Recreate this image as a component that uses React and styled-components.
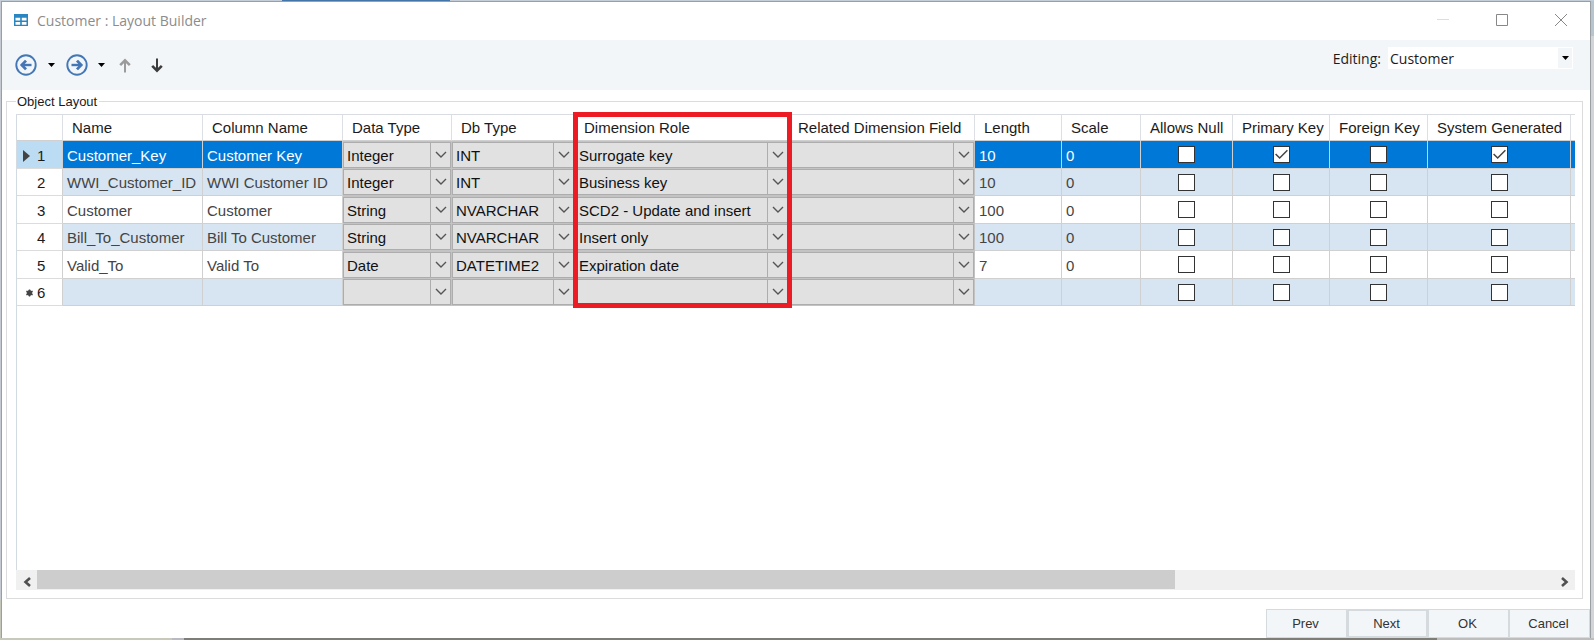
import React from "react";
import styled, { createGlobalStyle } from "styled-components";

const GlobalStyle = createGlobalStyle`
	* {
		box-sizing: border-box;
	}

	body {
		margin: 0;
		font-family: "Liberation Sans", Arial, sans-serif;
		color: #1b1b1b;
	}

	button, input, select {
		font-family: inherit;
		margin: 0;
	}
`;

// Whatever is open behind the window only shows as a thin rim.
const Desktop = styled.div`
	height: 100vh;
	padding: 1px 3px 2px 1px;
	background:
		linear-gradient(90deg, #c3ced9 282px, #4574a9 282px, #4574a9 450px, #c3ced9 450px) top / 100% 1px no-repeat,
		linear-gradient(90deg, #c9c9bb 172px, #b9b9c1 172px, #b9b9c1 184px, #7f7d78 184px, #7f7d78 1437px, #bdbdbd 1437px) bottom / 100% 2px no-repeat,
		linear-gradient(#b8c4ce 36px, #d2d4d7 36px) right / 3px 100% no-repeat,
		linear-gradient(#c5cad2 600px, #c3c6b8 600px);
`;

const Window = styled.div`
	display: flex;
	flex-direction: column;
	height: 100%;
	background: #fff;
	border: 1px solid #9a9fa4;
	border-bottom: 0;
`;

const TitleBar = styled.header`
	display: flex;
	align-items: center;
	height: 38px;
	padding: 0 0 2px 11px;
	gap: 8px;
`;

const Title = styled.h1`
	flex: 1;
	margin: 0;
	font: 400 14px "Open Sans", "Noto Sans", sans-serif;
	color: #8c8c8c;
`;

const WindowControls = styled.div`
	display: flex;
`;

const IconButton = styled.button`
	display: flex;
	align-items: center;
	justify-content: center;
	width: ${props => props.$width}px;
	height: 24px;
	padding: 0;
	border: 0;
	background: none;
`;

const Toolbar = styled.div`
	display: flex;
	align-items: flex-start;
	justify-content: space-between;
	height: 50px;
	padding: 7px 17px 0 11px;
	background: #f2f6f9;
`;

const Tools = styled.div`
	display: flex;
	padding-top: 6px;
`;

const Editing = styled.div`
	display: flex;
	align-items: center;
	gap: 7px;
	font: 400 14px "Open Sans", "Noto Sans", sans-serif;
`;

const EditingBox = styled.div`
	display: flex;
	align-items: center;
	width: 185px;
	height: 22px;
	background: #fff;
`;

const PlainSelect = styled.select`
	flex: 1;
	min-width: 0;
	height: 100%;
	padding: 0 0 0 2px;
	border: 0;
	appearance: none;
	background: none;
	font: inherit;
	color: inherit;
`;

const SelectArrow = styled.span`
	display: flex;
	align-items: center;
	justify-content: center;
	width: 14px;
	height: 20px;
	margin-right: 1px;
	background: #f2f6f9;
`;

const Group = styled.fieldset`
	flex: 1;
	display: flex;
	flex-direction: column;
	min-width: 0;
	min-height: 0;
	margin: 3px 7px 0 4px;
	padding: 4px 7px 8px 9px;
	border: 1px solid #dcdcdc;
`;

const Legend = styled.legend`
	padding: 1px 2px 0 1px;
	font-size: 13px;
	line-height: 16px;
`;

const GridPane = styled.div`
	flex: 1;
	min-height: 0;
	overflow-x: clip;
	overflow-y: visible;
	border-top: 1px solid #d9dde2;
	border-left: 1px solid #d3dae2;
`;

const Table = styled.table`
	width: 1700px;
	table-layout: fixed;
	border-collapse: separate;
	border-spacing: 0;
	font-size: 15px;
	line-height: 18px;
`;

const HeadCell = styled.th`
	height: 26px;
	padding: 1px 0 0 9px;
	border-right: 1px solid #dcdfe3;
	border-bottom: 1px solid #d0d0d0;
	font-weight: 400;
	text-align: left;
	white-space: nowrap;
`;

const Row = styled.tr`
	height: 28px;
	color: ${props => (props.$selected ? "#fff" : "#444")};
	background: ${props => (props.$selected ? "#0078d7" : "#fff")};

	&:nth-child(even) {
		height: 27px;
		background: #d7e4f1;
	}
`;

const RowHead = styled.th`
	padding: 2px 0 0;
	border-right: 1px solid #d0d0d0;
	border-bottom: 1px solid #dcdcdc;
	background: ${props => (props.$selected ? "#bcdcf4" : "#fff")};
	color: #1b1b1b;
	font-weight: 400;
`;

const RowMark = styled.div`
	display: flex;
	align-items: center;

	svg {
		width: 20px;
		flex: none;
	}
`;

const Cell = styled.td`
	padding: 2px 0 0 4px;
	border-right: 1px solid #d0d0d0;
	border-bottom: 1px solid #d0d0d0;
	white-space: nowrap;
`;

const ComboCell = styled(Cell)`
	padding: 0;
	border-color: #c3c3c3;
	background: #c3c3c3;
`;

const CheckCell = styled(Cell)`
	padding: 0;
	text-align: center;
	line-height: 0;
`;

const Combo = styled.div`
	display: flex;
	align-items: center;
	height: 26px;
	border: 1px solid #adadad;
	background: #e1e1e1;
	color: #111;

	select {
		padding: 2px 0 0 3px;
		font-size: 15px;
	}
`;

const ComboArrow = styled.span`
	display: flex;
	align-items: center;
	justify-content: center;
	width: 20px;
	height: 100%;
	border-left: 1px solid #adadad;
`;

const Check = styled.input`
	width: 17px;
	height: 17px;
	appearance: none;
	border: 1px solid #333;
	background: #fff;

	&:checked {
		background: #fff url("data:image/svg+xml,%3Csvg xmlns='http://www.w3.org/2000/svg' viewBox='0 0 14 14'%3E%3Cpath d='M1.5 6.5l3.8 3.8L12.5 3' fill='none' stroke='%23444' stroke-width='1.4'/%3E%3C/svg%3E");
	}
`;

const Highlight = styled.div`
	position: absolute;
	top: -3px;
	left: -2px;
	width: 219px;
	height: 196px;
	border: 5px solid #ed1c24;
	pointer-events: none;
`;

const HighlightHead = styled(HeadCell)`
	position: relative;
`;

const ScrollBar = styled.div`
	display: flex;
	height: 20px;
	background: #f0f0f0;
`;

const ScrollTrack = styled.div`
	flex: 1;
`;

const ScrollThumb = styled.div`
	width: 75%;
	height: 19px;
	background: #cdcdcd;
`;

const Footer = styled.footer`
	display: flex;
	justify-content: flex-end;
	padding-top: 10px;
`;

const FooterButton = styled.button`
	width: 81px;
	height: 29px;
	padding: 0 2px 0 0;
	border: ${props => (props.$primary ? 2 : 1)}px solid #d5dade;
	background: #f2f6f9;
	font-size: 13px;
	color: #333;
`;

const Caret = () => (
	<svg width="7" height="4" viewBox="0 0 7 4"><path d="M0 0h7L3.5 4z" fill="#000" /></svg>
);

const Chevron = () => (
	<svg width="12" height="8" viewBox="0 0 12 8"><path d="M1 1l5 5 5-5" fill="none" stroke="#555" strokeWidth="1.4" /></svg>
);

const CircleArrow = ({ flip }) => (
	<svg width="22" height="22" viewBox="0 0 22 22" fill="none" stroke="#4377b5" transform={flip ? "scale(-1 1)" : undefined}>
		<circle cx="11" cy="11" r="9.7" strokeWidth="1.9" />
		<path d="M16.5 11H6.8" strokeWidth="2.4" />
		<path d="M11 6.6L6.8 11l4.2 4.4" strokeWidth="2.8" />
	</svg>
);

const VerticalArrow = ({ up }) => (
	<svg width="12" height="15" viewBox="0 0 12 15" fill="none" stroke={up ? "#9b9b9b" : "#3c3c3c"}>
		<path d={up ? "M6 14.5V2" : "M6 .5V13"} strokeWidth="2" />
		<path d={up ? "M1.2 7.2L6 2.4l4.8 4.8" : "M1.2 7.8L6 12.6l4.8-4.8"} strokeWidth="2.6" />
	</svg>
);

const ScrollArrow = ({ right }) => (
	<svg width="8" height="10" viewBox="0 0 8 10"><path d={right ? "M1 1l4.5 4L1 9" : "M7 1L2.5 5 7 9"} fill="none" stroke="#505050" strokeWidth="2.6" /></svg>
);

const TableIcon = () => (
	<svg width="16" height="14" viewBox="0 0 16 14">
		<path d="M1 1h14v12H1z" fill="#2a86c0" />
		<path d="M2.5 4.8h4.7v2.7H2.5zM8.8 4.8h4.7v2.7H8.8zM2.5 9h4.7v2.7H2.5zM8.8 9h4.7v2.7H8.8z" fill="#fff" />
	</svg>
);

const columns = [
	["Name", 140],
	["Column Name", 140],
	["Data Type", 109],
	["Db Type", 123],
	["Dimension Role", 214],
	["Related Dimension Field", 186],
	["Length", 87],
	["Scale", 79],
	["Allows Null", 92],
	["Primary Key", 97],
	["Foreign Key", 98],
	["System Generated", 143],
];

const rows = [
	{ text: ["Customer_Key", "Customer Key"], combos: ["Integer", "INT", "Surrogate key", ""], sizes: ["10", "0"], flags: [false, true, false, true] },
	{ text: ["WWI_Customer_ID", "WWI Customer ID"], combos: ["Integer", "INT", "Business key", ""], sizes: ["10", "0"], flags: [false, false, false, false] },
	{ text: ["Customer", "Customer"], combos: ["String", "NVARCHAR", "SCD2 - Update and insert", ""], sizes: ["100", "0"], flags: [false, false, false, false] },
	{ text: ["Bill_To_Customer", "Bill To Customer"], combos: ["String", "NVARCHAR", "Insert only", ""], sizes: ["100", "0"], flags: [false, false, false, false] },
	{ text: ["Valid_To", "Valid To"], combos: ["Date", "DATETIME2", "Expiration date", ""], sizes: ["7", "0"], flags: [false, false, false, false] },
	{ text: ["", ""], combos: ["", "", "", ""], sizes: ["", ""], flags: [false, false, false, false] },
];

const Marker = ({ index }) => (
	<svg height="16" viewBox="0 0 20 16">
		{index === 0 && <path d="M6 2v12l7-6z" fill="#444" />}
		{index === rows.length - 1 && (
			<g stroke="#444">
				<circle cx="12.5" cy="8" r="2.4" fill="#444" />
				<path d="M12.5 4.5v7M9.4 6.2l6.2 3.6M15.6 6.2L9.4 9.8" strokeWidth="1.4" />
			</g>
		)}
	</svg>
);

const LayoutRow = ({ row, index }) => {
	const selected = index === 0;
	return (
		<Row $selected={selected}>
			<RowHead scope="row" $selected={selected}>
				<RowMark><Marker index={index} />{index + 1}</RowMark>
			</RowHead>
			{row.text.map((text, i) => <Cell key={i}>{text}</Cell>)}
			{row.combos.map((value, i) => (
				<ComboCell key={i}>
					<Combo>
						<PlainSelect aria-label={columns[i + 2][0]} defaultValue={value}>
							<option>{value}</option>
						</PlainSelect>
						<ComboArrow><Chevron /></ComboArrow>
					</Combo>
				</ComboCell>
			))}
			{row.sizes.map((text, i) => <Cell key={i}>{text}</Cell>)}
			{row.flags.map((on, i) => (
				<CheckCell key={i}>
					<Check type="checkbox" aria-label={columns[i + 8][0]} defaultChecked={on} />
				</CheckCell>
			))}
			<Cell />
		</Row>
	);
};

const LayoutGrid = () => (
	<GridPane>
		<Table>
			<colgroup>
				<col style={{ width: 46 }} />
				{columns.map(([name, width]) => <col key={name} style={{ width }} />)}
				<col />
			</colgroup>
			<thead>
				<tr>
					<HeadCell />
					{columns.map(([name]) => (
						name === "Dimension Role"
							? <HighlightHead key={name}>{name}<Highlight /></HighlightHead>
							: <HeadCell key={name}>{name}</HeadCell>
					))}
					<HeadCell />
				</tr>
			</thead>
			<tbody>
				{rows.map((row, i) => <LayoutRow key={i} row={row} index={i} />)}
			</tbody>
		</Table>
	</GridPane>
);

const App = () => {
	return (
		<Desktop>
			<GlobalStyle />
			<Window>
				<TitleBar>
					<TableIcon />
					<Title>Customer : Layout Builder</Title>
					<WindowControls>
						<IconButton $width={59} aria-label="Minimize">
							<svg width="12" height="12" viewBox="0 0 12 12"><path d="M0 5.5h12" stroke="#ddd" /></svg>
						</IconButton>
						<IconButton $width={59} aria-label="Maximize">
							<svg width="12" height="12" viewBox="0 0 12 12"><path d="M.5.5h11v11H.5z" fill="none" stroke="#888" /></svg>
						</IconButton>
						<IconButton $width={59} aria-label="Close">
							<svg width="12" height="12" viewBox="0 0 12 12"><path d="M0 0l12 12M12 0L0 12" stroke="#888" /></svg>
						</IconButton>
					</WindowControls>
				</TitleBar>
				<Toolbar>
					<Tools>
						<IconButton $width={25} aria-label="Back"><CircleArrow /></IconButton>
						<IconButton $width={26} aria-label="Back history"><Caret /></IconButton>
						<IconButton $width={25} aria-label="Forward"><CircleArrow flip /></IconButton>
						<IconButton $width={24} aria-label="Forward history"><Caret /></IconButton>
						<IconButton $width={24} aria-label="Move up"><VerticalArrow up /></IconButton>
						<IconButton $width={40} aria-label="Move down"><VerticalArrow /></IconButton>
					</Tools>
					<Editing>
						<label htmlFor="editing">Editing:</label>
						<EditingBox>
							<PlainSelect id="editing" defaultValue="Customer">
								<option>Customer</option>
							</PlainSelect>
							<SelectArrow><Caret /></SelectArrow>
						</EditingBox>
					</Editing>
				</Toolbar>
				<Group>
					<Legend>Object Layout</Legend>
					<LayoutGrid />
					<ScrollBar>
						<IconButton $width={21} aria-label="Scroll left"><ScrollArrow /></IconButton>
						<ScrollTrack><ScrollThumb /></ScrollTrack>
						<IconButton $width={21} aria-label="Scroll right"><ScrollArrow right /></IconButton>
					</ScrollBar>
				</Group>
				<Footer>
					<FooterButton>Prev</FooterButton>
					<FooterButton $primary>Next</FooterButton>
					<FooterButton>OK</FooterButton>
					<FooterButton>Cancel</FooterButton>
				</Footer>
			</Window>
		</Desktop>
	);
};

export default App;
